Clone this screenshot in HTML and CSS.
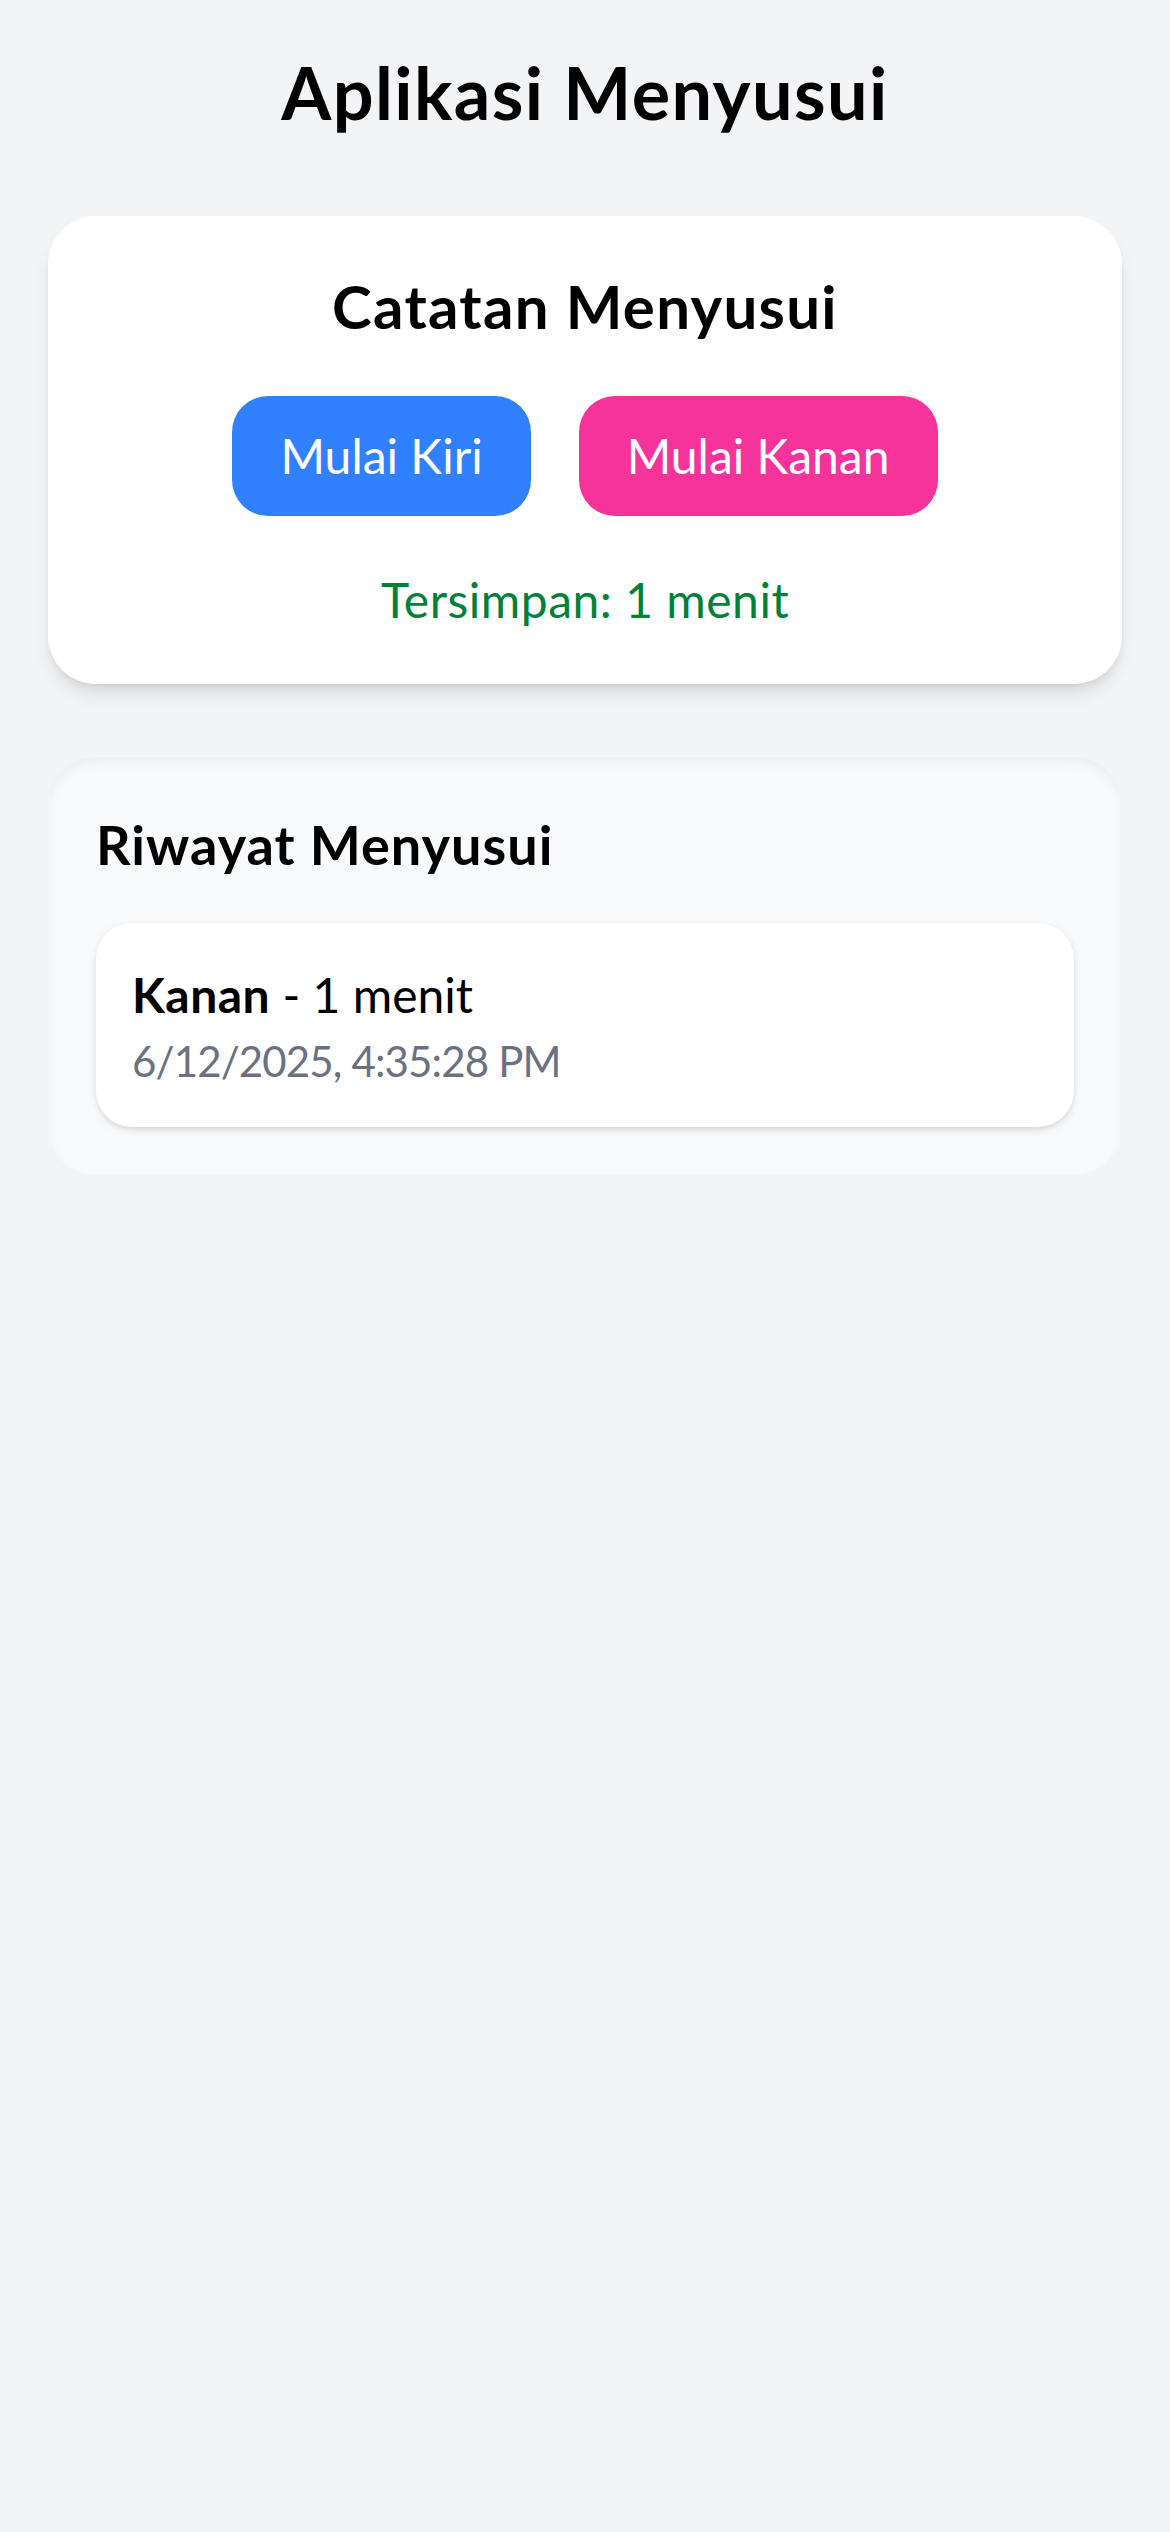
FILE: index.html
```html
<!DOCTYPE html>
<html lang="id">
<head>
<meta charset="utf-8">
<title>Aplikasi Menyusui</title>
<link rel="stylesheet" href="styles.css">
</head>
<body>
<main class="page">
  <h1 class="title">Aplikasi Menyusui</h1>
  <section class="card">
    <h2 class="card-title">Catatan Menyusui</h2>
    <div class="actions">
      <button class="btn btn-left">Mulai Kiri</button>
      <button class="btn btn-right">Mulai Kanan</button>
    </div>
    <p class="saved">Tersimpan: 1 menit</p>
  </section>
  <section class="history">
    <h3 class="history-title">Riwayat Menyusui</h3>
    <ul class="entries">
      <li class="entry">
        <div class="entry-main"><strong>Kanan</strong> - 1 menit</div>
        <div class="entry-date">6/12/2025, 4:35:28 PM</div>
      </li>
    </ul>
  </section>
</main>
</body>
</html>
```

FILE: styles.css
```css
* { box-sizing: border-box; }
html, body {
  margin: 0;
  padding: 0;
  background: #f3f4f6;
  font-family: Lato, "Open Sans", sans-serif;
  color: #000;
}
.page {
  min-height: 2532px;
  padding: 44px 48px;
}
.title {
  margin: 0 0 76px;
  font-size: 72px;
  line-height: 96px;
  font-weight: 700;
  letter-spacing: 1.4px;
  text-align: center;
}
.card {
  background: #fff;
  border-radius: 48px;
  padding: 48px;
  text-align: center;
  box-shadow: 0 12px 18px -3px rgba(0,0,0,0.1), 0 6px 12px -6px rgba(0,0,0,0.1);
}
.card-title {
  margin: 0;
  font-size: 60px;
  line-height: 84px;
  font-weight: 700;
  letter-spacing: 1.3px;
}
.actions {
  display: flex;
  justify-content: center;
  gap: 48px;
  margin-top: 48px;
}
.btn {
  border: 0;
  height: 120px;
  padding: 0 48px;
  border-radius: 36px;
  font-family: inherit;
  font-size: 48px;
  line-height: 72px;
  font-weight: 400;
  color: #fff;
}
.btn-left { background: #3080ff; }
.btn-right { background: #f6339a; }
.saved {
  margin: 48px 0 0;
  font-size: 48px;
  line-height: 72px;
  letter-spacing: 0.5px;
  color: #008236;
}
.history {
  margin-top: 73px;
  background: #f9fafb;
  border-radius: 48px;
  padding: 46px 48px 48px;
  box-shadow: inset 0 6px 12px rgba(0,0,0,0.05);
}
.history-title {
  margin: 0 0 36px;
  font-size: 54px;
  line-height: 84px;
  font-weight: 700;
  letter-spacing: 1px;
}
.entries {
  list-style: none;
  margin: 0;
  padding: 0;
}
.entry {
  background: #fff;
  border-radius: 36px;
  padding: 36px;
  box-shadow: 0 3px 9px rgba(0,0,0,0.1), 0 3px 6px -3px rgba(0,0,0,0.1);
}
.entry-main {
  font-size: 48px;
  line-height: 72px;
}
.entry-main strong { font-weight: 700; letter-spacing: 0.5px; }
.entry-date {
  font-size: 42px;
  line-height: 60px;
  letter-spacing: -0.85px;
  color: #6a7282;
}
```
